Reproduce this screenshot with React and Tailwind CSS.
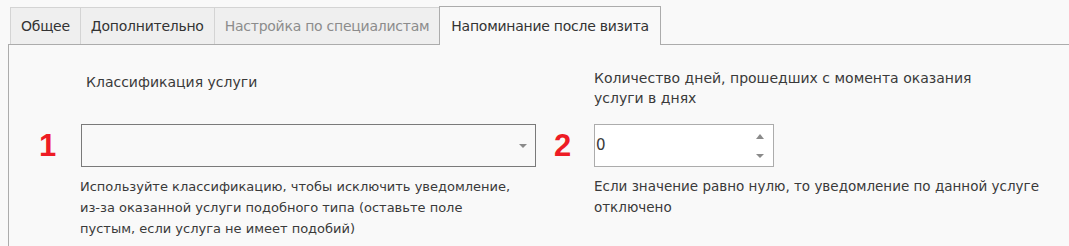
export default function App() {
  const font = { fontFamily: '"DejaVu Sans", Verdana, sans-serif' };
  const tabs = [
    { label: 'Общее', state: 'normal' },
    { label: 'Дополнительно', state: 'normal' },
    { label: 'Настройка по специалистам', state: 'disabled' },
    { label: 'Напоминание после визита', state: 'active' },
  ];

  return (
    <div className="w-[1069px] h-[246px] bg-[#f9f9f9] overflow-hidden text-[#3a3a3a] font-['DejaVu_Sans',Verdana,sans-serif]">
      <div className="flex items-end pl-[10px] pt-[5px] h-[44px]">
        {tabs.map((t) =>
          t.state === 'active' ? (
            <div
              key={t.label}
              className="relative z-10 h-[39px] -mb-px px-[11px] flex items-center border border-b-0 border-[#acacac] bg-[#f9f9f9] text-[14px] text-[#333] tracking-[-0.25px]"
            >
              {t.label}
            </div>
          ) : (
            <div
              key={t.label}
              className={
                'h-[37px] px-[10px] flex items-center border border-b-0 border-r-0 border-[#d4d4d4] bg-[#efefef] text-[14px] tracking-[-0.25px] ' +
                (t.state === 'disabled' ? 'text-[#8c8c8c]' : 'text-[#333]')
              }
            >
              {t.label}
            </div>
          )
        )}
      </div>

      <div className="ml-[8px] border-l border-t border-[#acacac] h-[210px] text-[13px] leading-[21px]">
        <div className="grid grid-cols-[72px_455px_58px_1fr]">
          <div />
          <div className="pl-[5px] pt-[27px] h-[79px] text-[14px]">Классификация услуги</div>
          <div />
          <div className="pt-[23px] h-[79px] w-[420px] leading-[20px] text-[14px]">
            Количество дней, прошедших с момента оказания услуги в днях
          </div>

          <div className="flex items-center pl-[30px] h-[43px] text-[31px] font-bold text-[#ee1c25]" style={{ fontFamily: '"Liberation Sans", Arial, sans-serif' }}>
            1
          </div>
          <div className="h-[43px] border border-[#7a7a7a] bg-[#f9f9f9] flex items-center justify-end pr-[8px]">
            <svg width="8" height="4" viewBox="0 0 8 4">
              <path d="M0 0 L8 0 L4 4 Z" fill="#8a8a8a" />
            </svg>
          </div>
          <div className="flex items-center pl-[18px] h-[43px] text-[31px] font-bold text-[#ee1c25]" style={{ fontFamily: '"Liberation Sans", Arial, sans-serif' }}>
            2
          </div>
          <div className="h-[43px]">
            <div className="w-[180px] h-[43px] border border-[#acacac] bg-white flex items-center justify-between pl-[1px] pr-[9px] text-[15px]" style={font}>
              <span>0</span>
              <div className="flex flex-col gap-[15px]">
                <svg width="8" height="5" viewBox="0 0 8 5">
                  <path d="M0 5 L8 5 L4 0 Z" fill="#8a8a8a" />
                </svg>
                <svg width="8" height="4" viewBox="0 0 8 4">
                  <path d="M0 0 L8 0 L4 4 Z" fill="#8a8a8a" />
                </svg>
              </div>
            </div>
          </div>

          <div />
          <div className="pt-[9px] w-[436px] -ml-[1px]">
            Используйте классификацию, чтобы исключить уведомление, из-за оказанной услуги подобного типа (оставьте поле пустым, если услуга не имеет подобий)
          </div>
          <div />
          <div className="pt-[9px] w-[475px] text-[13.5px]">
            Если значение равно нулю, то уведомление по данной услуге отключено
          </div>
        </div>
      </div>
    </div>
  );
}
